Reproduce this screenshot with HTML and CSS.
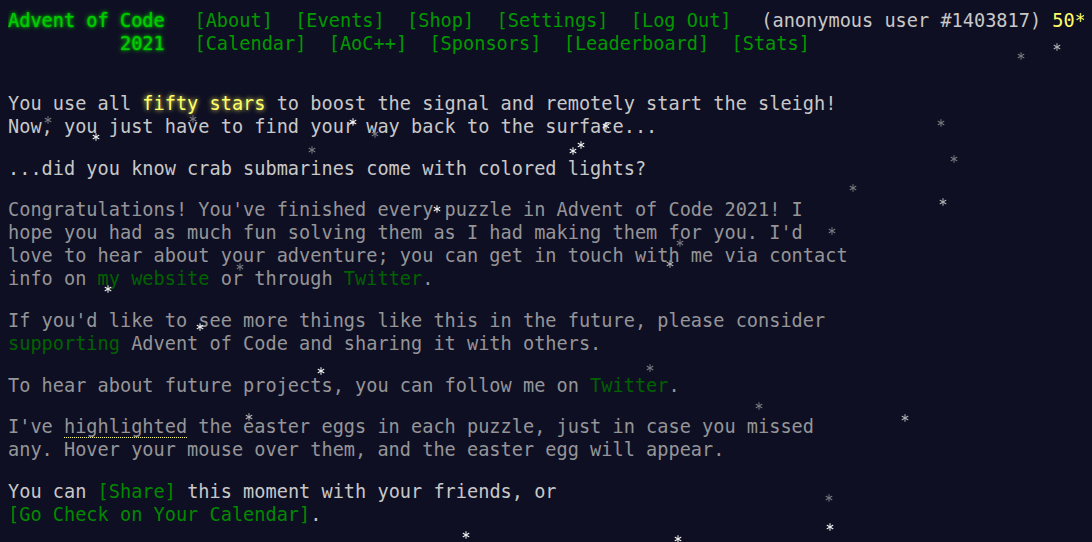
FILE: index.html
```html
<!DOCTYPE html>
<html lang="en">
<head>
<meta charset="utf-8">
<title>Advent of Code 2021</title>
<link rel="stylesheet" href="styles.css">
</head>
<body>
<svg class="defs" width="0" height="0" aria-hidden="true">
  <defs>
    <symbol id="st" viewBox="0 0 10 10">
      <g stroke="currentColor" stroke-width="1.3" stroke-linecap="round">
        <line x1="5" y1="0.8" x2="5" y2="9.2"/>
        <line x1="1.4" y1="2.9" x2="8.6" y2="7.1"/>
        <line x1="1.4" y1="7.1" x2="8.6" y2="2.9"/>
      </g>
    </symbol>
  </defs>
</svg>
<header>
  <div class="hrow">
    <h1 class="title"><a href="#">Advent of Code</a></h1>
    <nav>
      <ul>
        <li><a href="#">[About]</a></li>
        <li><a href="#">[Events]</a></li>
        <li><a href="#">[Shop]</a></li>
        <li><a href="#">[Settings]</a></li>
        <li><a href="#">[Log Out]</a></li>
      </ul>
    </nav>
    <div class="user">(anonymous user #1403817) <span class="star-count">50*</span></div>
  </div>
  <div class="hrow">
    <h1 class="title event"><a href="#">2021</a></h1>
    <nav>
      <ul>
        <li><a href="#">[Calendar]</a></li>
        <li><a href="#">[AoC++]</a></li>
        <li><a href="#">[Sponsors]</a></li>
        <li><a href="#">[Leaderboard]</a></li>
        <li><a href="#">[Stats]</a></li>
      </ul>
    </nav>
  </div>
</header>
<main>
  <article>
    <p>You use all <span class="fifty">fifty stars</span> to boost the signal and remotely start the sleigh! Now, you just have to find your way back to the surface...</p>
    <p>...did you know crab submarines come with colored lights?</p>
    <p class="dim">Congratulations! You've finished every puzzle in Advent of Code 2021! I hope you had as much fun solving them as I had making them for you. I'd love to hear about your adventure; you can get in touch with me via contact info on <a href="#">my website</a> or through <a href="#">Twitter</a>.</p>
    <p class="dim">If you'd like to see more things like this in the future, please consider <a href="#">supporting</a> Advent of Code and sharing it with others.</p>
    <p class="dim">To hear about future projects, you can follow me on <a href="#">Twitter</a>.</p>
    <p class="dim">I've <span class="hl">highlighted</span> the easter eggs in each puzzle, just in case you missed any. Hover your mouse over them, and the easter egg will appear.</p>
    <p class="last">You can <a class="share" href="#">[Share]</a> this moment with your friends, or <a class="nobr" href="#">[Go Check on Your Calendar]</a>.</p>
  </article>
</main>
<div class="sky" aria-hidden="true">
  <svg class="star m" style="left:1053px;top:44px"><use href="#st"/></svg>
  <svg class="star f" style="left:1017px;top:53px"><use href="#st"/></svg>
  <svg class="star f" style="left:44px;top:117px"><use href="#st"/></svg>
  <svg class="star b" style="left:92px;top:134px"><use href="#st"/></svg>
  <svg class="star f" style="left:189px;top:116px"><use href="#st"/></svg>
  <svg class="star b" style="left:349px;top:119px"><use href="#st"/></svg>
  <svg class="star f" style="left:371px;top:131px"><use href="#st"/></svg>
  <svg class="star f" style="left:308px;top:147px"><use href="#st"/></svg>
  <svg class="star b" style="left:602px;top:123px"><use href="#st"/></svg>
  <svg class="star b" style="left:577px;top:142px"><use href="#st"/></svg>
  <svg class="star b" style="left:569px;top:148px"><use href="#st"/></svg>
  <svg class="star f" style="left:937px;top:120px"><use href="#st"/></svg>
  <svg class="star f" style="left:950px;top:156px"><use href="#st"/></svg>
  <svg class="star f" style="left:849px;top:185px"><use href="#st"/></svg>
  <svg class="star m" style="left:939px;top:199px"><use href="#st"/></svg>
  <svg class="star f" style="left:828px;top:228px"><use href="#st"/></svg>
  <svg class="star b" style="left:433px;top:206px"><use href="#st"/></svg>
  <svg class="star f" style="left:676px;top:240px"><use href="#st"/></svg>
  <svg class="star m" style="left:666px;top:261px"><use href="#st"/></svg>
  <svg class="star f" style="left:236px;top:264px"><use href="#st"/></svg>
  <svg class="star b" style="left:104px;top:286px"><use href="#st"/></svg>
  <svg class="star b" style="left:196px;top:324px"><use href="#st"/></svg>
  <svg class="star b" style="left:317px;top:368px"><use href="#st"/></svg>
  <svg class="star f" style="left:646px;top:365px"><use href="#st"/></svg>
  <svg class="star f" style="left:755px;top:403px"><use href="#st"/></svg>
  <svg class="star m" style="left:901px;top:415px"><use href="#st"/></svg>
  <svg class="star m" style="left:245px;top:414px"><use href="#st"/></svg>
  <svg class="star f" style="left:825px;top:495px"><use href="#st"/></svg>
  <svg class="star b" style="left:826px;top:524px"><use href="#st"/></svg>
  <svg class="star b" style="left:462px;top:532px"><use href="#st"/></svg>
  <svg class="star b" style="left:674px;top:536px"><use href="#st"/></svg>
</div>
</body>
</html>
```

FILE: styles.css
```css
html {
  overflow: hidden;
}

body {
  margin: 8px;
  padding-top: 1px;
  background: #0f0f23;
  color: #c8c8c8;
  font-family: "DejaVu Sans Mono", "Liberation Mono", monospace;
  font-size: 18.6px;
  line-height: 23px;
  position: relative;
  min-height: 520px;
}

a {
  color: #009900;
  text-decoration: none;
}

.defs {
  position: absolute;
}

header {
  margin-bottom: 2em;
  white-space: nowrap;
}

.hrow {
  display: flex;
  align-items: baseline;
}

.title {
  margin: 0;
  font-size: inherit;
  font-weight: normal;
  width: 14ch;
  padding-right: 1em;
  text-align: right;
  flex: none;
}

.title a {
  color: #00cc00;
  text-shadow: 0 0 2px #00cc00, 0 0 5px #00cc00;
}

nav ul {
  list-style: none;
  margin: 0;
  padding: 0;
  display: flex;
}

nav li {
  padding: 0 0.6em;
}

.user {
  padding-left: 1em;
}

.star-count {
  color: #ffff66;
}

article {
  width: 75.5ch;
}

article p {
  margin: 1em 0;
}

.fifty {
  color: #ffff66;
  text-shadow: 0 0 5px #ffff66;
}

.dim {
  color: #959598;
}

.dim a {
  color: #006200;
}

.last a {
  color: #008a00;
}

.nobr {
  white-space: nowrap;
}

.hl {
  border-bottom: 1px dotted #ffff66;
}

.sky {
  position: absolute;
  left: -8px;
  top: -9px;
  width: 1092px;
  height: 542px;
  pointer-events: none;
}

.star {
  position: absolute;
  width: 8px;
  height: 8px;
}

.star.b {
  color: #f2f2f2;
}

.star.m {
  color: #b0b0b4;
}

.star.f {
  color: #77777f;
}
```
